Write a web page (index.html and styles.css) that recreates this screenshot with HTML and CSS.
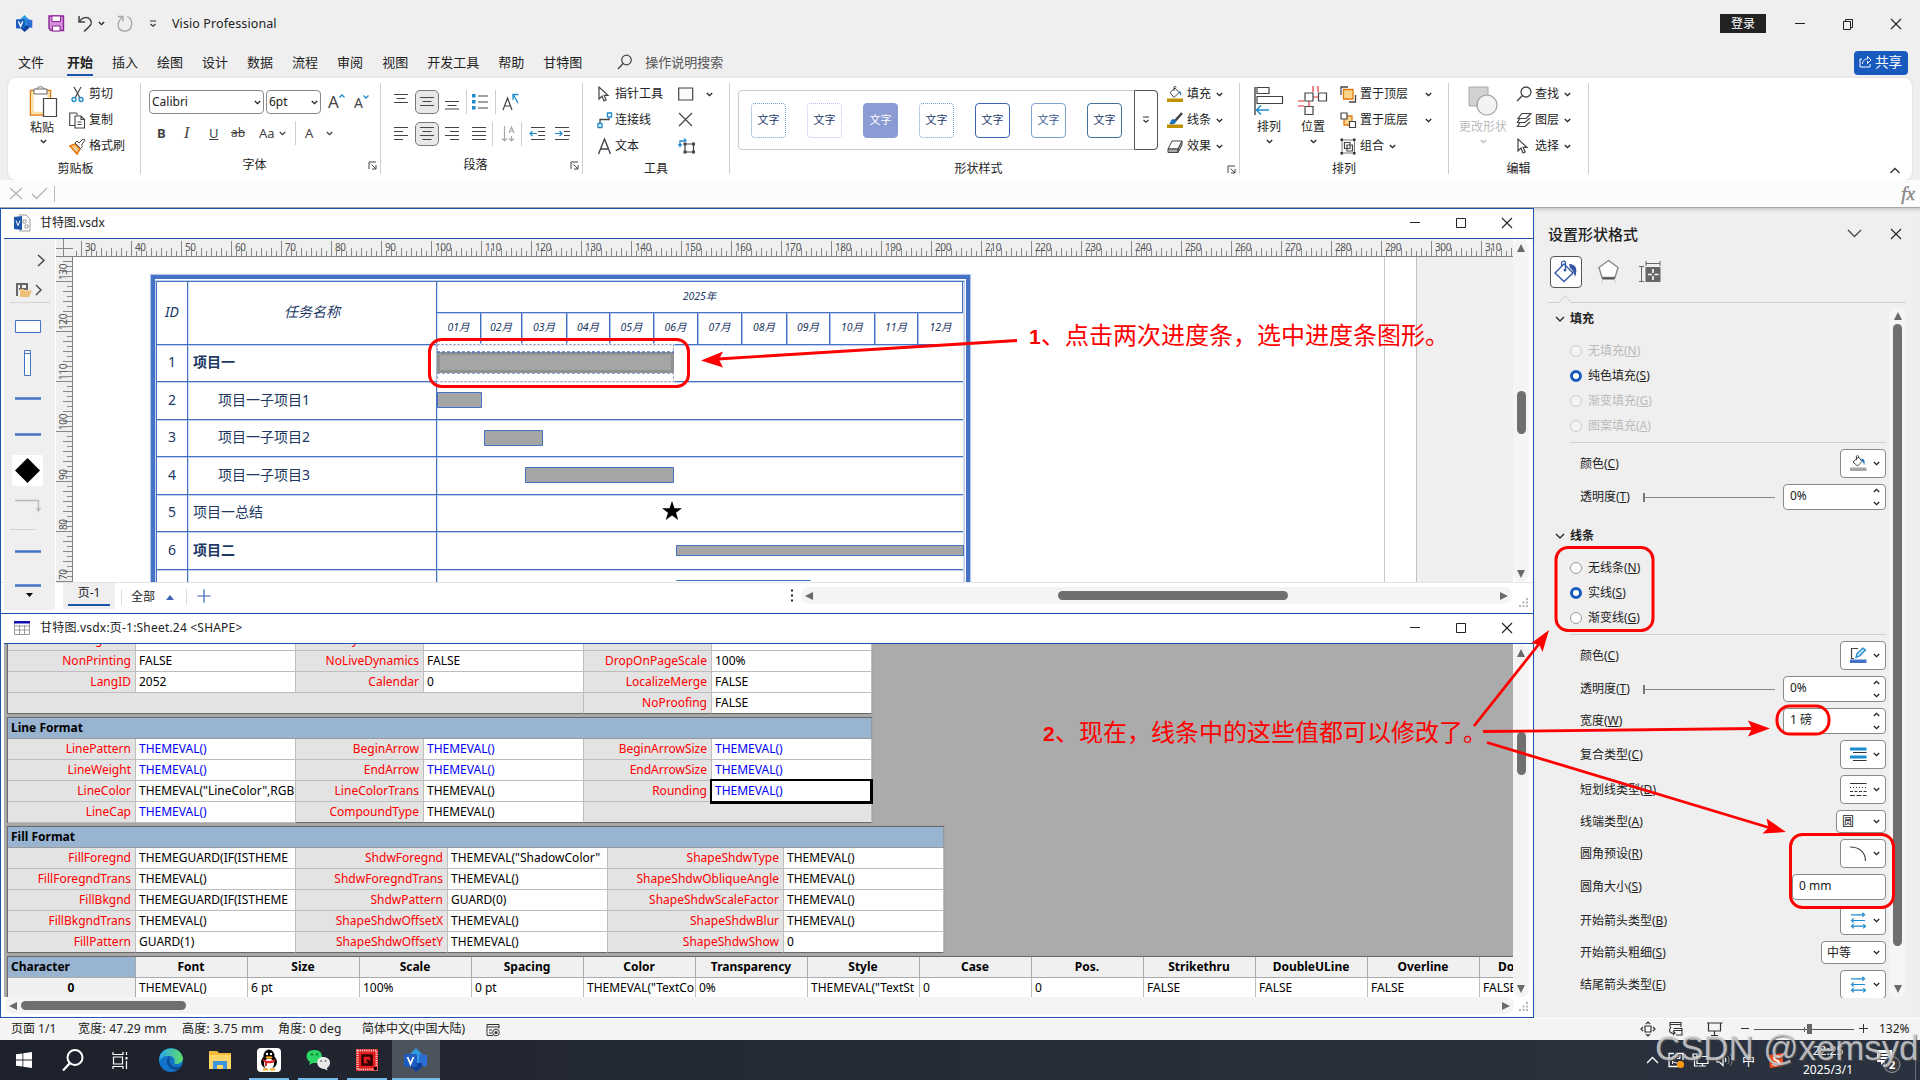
FILE: index.html
```html
<!DOCTYPE html>
<html lang="zh-CN">
<head>
<meta charset="utf-8">
<title>Visio Professional</title>
<link rel="stylesheet" href="styles.css">
</head>
<body>
<svg width="0" height="0" class="defs">
  <defs>
    <symbol id="chev" viewBox="0 0 7 5"><path d="M.8 1l2.700 2.700L6.200 1" fill="none" stroke="currentColor" stroke-width="1.300"/></symbol>
    <symbol id="launch" viewBox="0 0 9 9"><path d="M1 8V1h7M3.500 3.500L8 8M8 4v4H4" fill="none" stroke="#444"/></symbol>
    <symbol id="min" viewBox="0 0 12 12"><path d="M1 5.500h10" stroke="#222" fill="none"/></symbol>
    <symbol id="max" viewBox="0 0 12 12"><path d="M1.500 1.500h9v9h-9z" stroke="#222" fill="none"/></symbol>
    <symbol id="close" viewBox="0 0 12 12"><path d="M1 1l10 10M11 1L1 11" stroke="#222" fill="none" stroke-width="1.100"/></symbol>
    <symbol id="grip" viewBox="0 0 10 10"><path d="M8 1h2M8 4.500h2M4.500 4.500h2M8 8h2M4.500 8h2M1 8h2" stroke="#b5b5b5" stroke-width="2"/></symbol>
    <symbol id="arrows" viewBox="0 0 18 18"><path d="M1 3h14M13 .8L15.500 3 13 5.200M3 9h13M4 6.800L1.500 9 4 11.200M2 15h14M4 12.800L1.500 15 4 17.200M14 12.800l2.500 2.200-2.500 2.200" fill="none" stroke="#1e8bcd" stroke-width="1.200"/></symbol>
    <symbol id="cursor" viewBox="0 0 12 16"><path d="M2 1v12l3-3 2 5 2.200-1-2-4.600H11z" fill="#fff" stroke="#444" stroke-width="1.200"/></symbol>
    <symbol id="visio" viewBox="0 0 24 24"><path d="M12 0l6 6v12H6V6z" fill="#2f9ae0"/><path d="M15 6l8 1v11h-8z" fill="#2b6fd6"/><path d="M7 15h11v4l-6 5-5-5z" fill="#11409a"/><rect y="6" width="13" height="13" rx="1.500" fill="#1b5cbe"/><path d="M3.500 9l3 7 3-7" stroke="#fff" stroke-width="1.800" fill="none"/></symbol>
  </defs>
</svg>
<div class="app">
  <header class="titlebar">
    <svg width="17" height="17"><use href="#visio"/></svg>
    <svg width="17" height="17" viewBox="0 0 17 17"><path d="M1 1h14.500v14.500H3L1 13.500z" fill="#d68fdb" stroke="#8a2597" stroke-width="1.400"/><path d="M4 1h8.500v5.500H4z" fill="#fff" stroke="#8a2597"/><path d="M4.500 16v-5h7.500v5z" fill="#fff" stroke="#8a2597"/></svg>
    <svg width="17" height="18" viewBox="0 0 17 18"><path d="M2 1v6h6M2 7C5 2 11 1 13.500 5S13 11 7 16.500" fill="none" stroke="#444" stroke-width="1.500"/></svg>
    <svg width="7" height="5"><use href="#chev"/></svg>
    <svg width="18" height="18" viewBox="0 0 18 18"><path d="M2 1.500h5v5M11 1.500C18 4 17 16 9 16S0 8 6 2.500" fill="none" stroke="#a4a4a4" stroke-width="1.300"/></svg>
    <svg width="8" height="8" viewBox="0 0 8 8"><path d="M1 1h6M1.500 4L4 6.300 6.500 4" fill="none" stroke="#333" stroke-width="1.200"/></svg>
    <span class="app-name">Visio Professional</span>
    <span class="login">登录</span>
    <svg width="12" height="12"><use href="#min"/></svg>
    <svg width="12" height="12" viewBox="0 0 12 12"><path d="M1.500 3.500h7v8h-7zM3.500 3V1.500H10.500V9.500H9" fill="none" stroke="#222"/></svg>
    <svg width="12" height="12"><use href="#close"/></svg>
  </header>

  <nav class="tabs">
    <span>文件</span><span class="on">开始</span><span>插入</span><span>绘图</span><span>设计</span><span>数据</span><span>流程</span><span>审阅</span><span>视图</span><span>开发工具</span><span>帮助</span><span>甘特图</span>
    <span class="tellme"><svg width="16" height="16" viewBox="0 0 16 16"><circle cx="9.500" cy="6" r="4.800" fill="none" stroke="#444" stroke-width="1.200"/><path d="M6 9.500L1 15" stroke="#444" stroke-width="1.300"/></svg>操作说明搜索</span>
    <span class="share"><svg width="13" height="13" viewBox="0 0 13 13"><path d="M3 4H1v8h10V9M3.500 9c0-4 3-5 5-5V1.500L12 5 8.500 8.500V6" fill="none" stroke="#fff"/></svg>共享</span>
  </nav>

  <section class="ribbon-wrap">
  <div class="ribbon">
    <div class="group g-clip">
      <div class="body">
        <div class="big">
          <svg width="30" height="32" viewBox="0 0 30 32"><path d="M1.500 4.500h20V29h-20z" fill="#fff" stroke="#e07a10" stroke-width="1.500"/><path d="M3.500 6.500h16V27h-16z" fill="none" stroke="#fbe0a6" stroke-width="2.500"/><path d="M5 3h13v5H5zM8 3c0-3 7-3 7 0" fill="#fff" stroke="#666"/><path d="M14.500 12.500h13v18h-13z" fill="#fff" stroke="#444" stroke-width="1.200"/></svg>
          <span>粘贴</span><svg class="dd" width="7" height="5"><use href="#chev"/></svg>
        </div>
        <div class="stack">
          <div class="cmd"><svg width="18" height="17" viewBox="0 0 18 17"><path d="M5 1l6 11M12 1L6 12" stroke="#444" fill="none" stroke-width="1.200"/><circle cx="5" cy="13.500" r="2" fill="none" stroke="#1e8bcd" stroke-width="1.300"/><circle cx="12" cy="13.500" r="2" fill="none" stroke="#1e8bcd" stroke-width="1.300"/></svg>剪切</div>
          <div class="cmd"><svg width="18" height="17" viewBox="0 0 18 17"><path d="M6 13.500H.7V1h6.500l1.500 2M6 4h6l3.500 3.500V16H6zM12 4v3.500h3.500M8.500 10h4M8.500 12.500h4" fill="none" stroke="#444" stroke-width="1.100"/></svg>复制</div>
          <div class="cmd"><svg width="18" height="17" viewBox="0 0 18 17"><path d="M1 8l5-2 5 5-3 5z" fill="#fbc98c" stroke="#e07a10" stroke-width="1.600"/><path d="M6 5l2-2 2 2 4-4 2 1-3.500 5 1 1.500-2 2z" fill="#fff" stroke="#444"/></svg>格式刷</div>
        </div>
      </div>
      <div class="label">剪贴板</div>
    </div>

    <div class="group g-font">
      <div class="lines">
        <div class="font-a">
          <span class="combo">Calibri<svg width="7" height="5"><use href="#chev"/></svg></span>
          <span class="combo">6pt<svg width="7" height="5"><use href="#chev"/></svg></span>
          <span class="grow">A<svg width="6" height="4" viewBox="0 0 6 4"><path d="M.5 3.500L3 1l2.500 2.500" fill="none" stroke="#1e8bcd" stroke-width="1.300"/></svg></span>
          <span class="grow sm">A<svg width="6" height="4" viewBox="0 0 6 4"><path d="M.5.5L3 3 5.500.5" fill="none" stroke="#1e8bcd" stroke-width="1.300"/></svg></span>
        </div>
        <div class="font-b">
          <b>B</b><i>I</i><u>U</u><s>ab</s><span>Aa</span><svg width="7" height="5"><use href="#chev"/></svg><hr><span>A</span><svg width="7" height="5"><use href="#chev"/></svg>
        </div>
      </div>
      <div class="label">字体<svg width="9" height="9"><use href="#launch"/></svg></div>
    </div>

    <div class="group g-para">
      <div class="lines">
        <div class="para-a">
          <svg width="16" height="16" viewBox="0 0 16 16"><path d="M1 .5h14M3.500 4.500h9M1 8.500h14" stroke="#444" stroke-width="1.200"/></svg>
          <span class="sel"><svg width="16" height="16" viewBox="0 0 16 16"><path d="M1 3.500h14M3.500 7.500h9M1 11.500h14" stroke="#444" stroke-width="1.200"/></svg></span>
          <svg width="16" height="16" viewBox="0 0 16 16"><path d="M1 7.500h14M3.500 11.500h9M1 15h14" stroke="#444" stroke-width="1.200"/></svg>
          <hr>
          <svg width="16" height="16" viewBox="0 0 16 16"><path d="M6 2h10M6 8h10M6 14h10" stroke="#444" stroke-width="1.200"/><path d="M0 0h3.500v3.500H0zM0 6h3.500v3.500H0zM0 12h3.500v3.500H0z" fill="#1e8bcd"/></svg>
          <hr>
          <svg width="18" height="18" viewBox="0 0 18 18"><path d="M1 17L5.500 5 10 17M2.500 13h6" fill="none" stroke="#444" stroke-width="1.200"/><path d="M16 10L11.500 2M11 7V1.500h5.500" fill="none" stroke="#1e8bcd" stroke-width="1.300"/></svg>
        </div>
        <div class="para-b">
          <svg width="16" height="16" viewBox="0 0 16 16"><path d="M1 1.500h14M1 5.500h9M1 9.500h14M1 13.500h9" stroke="#444" stroke-width="1.200"/></svg>
          <span class="sel"><svg width="16" height="16" viewBox="0 0 16 16"><path d="M1 1.500h14M3.500 5.500h9M1 9.500h14M3.500 13.500h9" stroke="#444" stroke-width="1.200"/></svg></span>
          <svg width="16" height="16" viewBox="0 0 16 16"><path d="M1 1.500h14M6 5.500h9M1 9.500h14M6 13.500h9" stroke="#444" stroke-width="1.200"/></svg>
          <svg width="16" height="16" viewBox="0 0 16 16"><path d="M1 1.500h14M1 5.500h14M1 9.500h14M1 13.500h14" stroke="#444" stroke-width="1.200"/></svg>
          <hr>
          <svg width="15" height="18" viewBox="0 0 15 18"><path d="M3.500 1v15M1 13.500L3.500 16 6 13.500M10.500 11v5M8 13.500l2.500 2.500 2.500-2.500M8 8l2.500-6L13 8M9 6h3" fill="none" stroke="#a8a8a8" stroke-width="1.200"/></svg>
          <hr>
          <svg width="16" height="16" viewBox="0 0 16 16"><path d="M2 1.500h14M9 5.500h7M9 9.500h7M2 13.500h14" stroke="#444" stroke-width="1.200"/><path d="M1 7.500h7M3.500 5L1 7.500 3.500 10" stroke="#1e8bcd" fill="none" stroke-width="1.200"/></svg>
          <svg width="16" height="16" viewBox="0 0 16 16"><path d="M0 1.500h14M9 5.500h6M9 9.500h6M0 13.500h14" stroke="#444" stroke-width="1.200"/><path d="M0 7.500h7M4.500 5L7 7.500 4.500 10" stroke="#1e8bcd" fill="none" stroke-width="1.200"/></svg>
        </div>
      </div>
      <div class="label">段落<svg width="9" height="9"><use href="#launch"/></svg></div>
    </div>

    <div class="group g-tools">
      <div class="body">
        <div class="stack">
          <div class="cmd"><svg width="18" height="16" viewBox="0 0 18 16"><use href="#cursor" width="12" height="16"/></svg>指针工具</div>
          <div class="cmd"><svg width="18" height="17" viewBox="0 0 18 17"><path d="M3 11V7.500h9V6" fill="none" stroke="#444" stroke-width="1.300"/><path d="M1 11.500h4v4H1zM10.500 1h4v4h-4z" fill="#fff" stroke="#1e8bcd" stroke-width="1.300"/></svg>连接线</div>
          <div class="cmd"><svg width="18" height="17" viewBox="0 0 18 17"><path d="M1.500 16L7.500 1l6 15M4 11h7" fill="none" stroke="#444" stroke-width="1.400"/></svg>文本</div>
        </div>
        <div class="stack">
          <div class="cmd"><svg width="28" height="14" viewBox="0 0 28 14"><path d="M.7 1h14v12h-14z" fill="#fafafa" stroke="#444" stroke-width="1.200"/></svg><svg width="7" height="5"><use href="#chev"/></svg></div>
          <div class="cmd"><svg width="16" height="16" viewBox="0 0 16 16"><path d="M1 1l13 13M14 1L1 14" stroke="#444" stroke-width="1.200"/></svg></div>
          <div class="cmd"><svg width="18" height="18" viewBox="0 0 18 18"><path d="M7 7h8.500v8H7z" fill="none" stroke="#444" stroke-width="1.200"/><path d="M5.500 5.500h3v3h-3zM14 5.500h3v3h-3zM5.500 13.500h3v3h-3zM14 13.500h3v3h-3z" fill="#444"/><path d="M2 9V4h6M.5 7L2 9.500 3.700 7M6 1.500L8.500 4" fill="none" stroke="#1e8bcd" stroke-width="1.300"/></svg></div>
        </div>
      </div>
      <div class="label">工具</div>
    </div>

    <div class="group g-style">
      <div class="body">
        <div class="gallery">
          <span class="dot1">文字</span><span class="dot2">文字</span><span class="solid">文字</span><span class="dot1">文字</span><span class="l1">文字</span><span class="l2">文字</span><span class="l3">文字</span>
          <div class="more"><svg width="8" height="8" viewBox="0 0 8 8"><path d="M1 1h6M1.500 4L4 6.300 6.500 4" fill="none" stroke="#333" stroke-width="1.200"/></svg></div>
        </div>
        <div class="stack">
          <div class="cmd"><svg width="20" height="17" viewBox="0 0 20 17"><path d="M3 6.500L8 2l4 4.500-5 5z" fill="#fff" stroke="#444"/><path d="M7 5V1.500c0-1.500 2-1.500 2 0" fill="none" stroke="#444"/><path d="M12 5c2 0 2.500 3 2 5l-2-4" fill="#1a6fb8"/><path d="M0 12.500h16V16H0z" fill="#c19000"/></svg>填充<svg class="gap" width="7" height="5"><use href="#chev"/></svg></div>
          <div class="cmd"><svg width="20" height="17" viewBox="0 0 20 17"><path d="M15 1L8 9" stroke="#444" stroke-width="2.500"/><path d="M2 12c2-1 1-5 5-5l2 2c0 3-3 4-7 3" fill="#1a6fb8"/><path d="M0 12.500h16V16H0z" fill="#c19000"/></svg>线条<svg class="gap" width="7" height="5"><use href="#chev"/></svg></div>
          <div class="cmd"><svg width="20" height="17" viewBox="0 0 20 17"><path d="M5 3h10l-4 8H1z" fill="#fff" stroke="#444"/><path d="M1 11h10v3.500H1zM11 11l4-8v4l-4 7.500z" fill="#aaa" stroke="#444"/></svg>效果<svg class="gap" width="7" height="5"><use href="#chev"/></svg></div>
        </div>
      </div>
      <div class="label">形状样式<svg width="9" height="9"><use href="#launch"/></svg></div>
    </div>

    <div class="group g-arr">
      <div class="body">
        <div class="big"><svg width="30" height="30" viewBox="0 0 30 30"><path d="M1 1v28" stroke="#444" stroke-width="1.400"/><path d="M3 1.500h12v6H3zM3 10.500h25.500v7H3z" fill="#fff" stroke="#444" stroke-width="1.200"/><path d="M15 24H3M7 19.500L2.500 24 7 28.500" fill="none" stroke="#1e8bcd" stroke-width="1.500"/></svg><span>排列</span><svg class="dd" width="7" height="5"><use href="#chev"/></svg></div>
        <div class="big"><svg width="30" height="30" viewBox="0 0 30 30"><path d="M15 0v6M20 0v6M0 15h6M0 20h6M11 15v6M15 11h5" stroke="#e03030" stroke-width="1.200"/><path d="M7 7h8v8H7zM20.500 7h8v8h-8zM7 20.500h8v8H7z" fill="#fff" stroke="#444" stroke-width="1.200"/></svg><span>位置</span><svg class="dd" width="7" height="5"><use href="#chev"/></svg></div>
        <div class="stack">
          <div class="cmd w"><svg width="20" height="17" viewBox="0 0 20 17"><path d="M8 1H1v8M15.500 9v7H9" fill="none" stroke="#444" stroke-width="1.300"/><path d="M3.500 3.500h9.500V13H3.500z" fill="#fbd68a" stroke="#e07a10" stroke-width="1.300"/></svg><span>置于顶层</span><svg width="7" height="5"><use href="#chev"/></svg></div>
          <div class="cmd w"><svg width="20" height="17" viewBox="0 0 20 17"><path d="M4 4h8v9H4z" fill="#fbd68a" stroke="#e07a10" stroke-width="1.300"/><path d="M1 1h6v6H1zM9.500 9.500h6v6h-6z" fill="#fff" stroke="#444" stroke-width="1.200"/></svg><span>置于底层</span><svg width="7" height="5"><use href="#chev"/></svg></div>
          <div class="cmd"><svg width="20" height="17" viewBox="0 0 20 17"><path d="M2 2h12.500v13H2z" fill="none" stroke="#777"/><path d="M.5.500h2.500v2.500H.5zM13 .5h2.500v2.500H13zM.5 14h2.500v2.500H.5zM13 14h2.500v2.500H13z" fill="#333"/><path d="M4.500 4.500h5.500v6H4.500zM7 7h5.500v6H7z" fill="none" stroke="#444" stroke-width="1.200"/></svg>组合<svg class="gap" width="7" height="5"><use href="#chev"/></svg></div>
        </div>
      </div>
      <div class="label">排列</div>
    </div>

    <div class="group g-edit">
      <div class="body">
        <div class="big off"><svg width="30" height="30" viewBox="0 0 30 30"><path d="M1 1h19v19H1z" fill="#d2d2d2" stroke="#a8a8a8"/><circle cx="19" cy="19" r="10" fill="#f3f3f3" stroke="#a0a0a0" stroke-width="1.200"/></svg><span>更改形状</span><svg class="dd" width="7" height="5"><use href="#chev"/></svg></div>
        <div class="stack">
          <div class="cmd"><svg width="19" height="16" viewBox="0 0 19 16"><circle cx="10" cy="6" r="5" fill="none" stroke="#444" stroke-width="1.300"/><path d="M6.500 9.500L1 15" stroke="#444" stroke-width="1.400"/></svg>查找<svg class="gap" width="7" height="5"><use href="#chev"/></svg></div>
          <div class="cmd"><svg width="19" height="16" viewBox="0 0 19 16"><path d="M6 1.500h9l-5 5H2zM4 6l-2.500 4.500H9L14 6M4 10.500L1.500 14.500H9L14 10" fill="none" stroke="#444" stroke-width="1.200"/></svg>图层<svg class="gap" width="7" height="5"><use href="#chev"/></svg></div>
          <div class="cmd"><svg width="19" height="16" viewBox="0 0 19 16"><use href="#cursor" width="12" height="16"/></svg>选择<svg class="gap" width="7" height="5"><use href="#chev"/></svg></div>
        </div>
      </div>
      <div class="label">编辑</div>
    </div>
    <svg class="collapse" width="12" height="7" viewBox="0 0 12 7"><path d="M1.500 6L6 1.500 10.500 6" fill="none" stroke="#333" stroke-width="1.300"/></svg>
  </div>
  </section>

  <div class="formula">
    <svg width="14" height="13" viewBox="0 0 14 13"><path d="M1 1l12 11M13 1L1 12" stroke="#b4b4b4" stroke-width="1.400"/></svg>
    <svg width="17" height="13" viewBox="0 0 17 13"><path d="M1 7l4.500 4.500L16 1" fill="none" stroke="#b4b4b4" stroke-width="1.400"/></svg>
    <hr><em>fx</em>
  </div>

  <main class="work">
    <div class="docs">
      <section class="win draw">
        <div class="wt">
          <svg width="17" height="18" viewBox="0 0 17 18"><path d="M5 1h7l4 4v12H5" fill="#fff" stroke="#999"/><path d="M9 6h3v3H9zM11 11h3v3h-3z" fill="none" stroke="#999"/><path d="M0 3l8-1v14l-8-1z" fill="#1c56a8"/><path d="M2 6.500l2 5 2-5" fill="none" stroke="#fff"/></svg>
          <span>甘特图.vsdx</span>
          <svg width="12" height="12"><use href="#min"/></svg><svg width="12" height="12"><use href="#max"/></svg><svg width="12" height="12"><use href="#close"/></svg>
        </div>
        <div class="draw-main">
          <aside class="stencil">
            <svg width="51" height="371" viewBox="4 239 51 371">
              <path d="M38 255l6 5.500-6 5.500M36 285l5 5-5 5" fill="none" stroke="#444" stroke-width="1.400"/>
              <path d="M17 296v-12h10v5h-8M21 284v9" fill="none" stroke="#666" stroke-width="2"/><path d="M20 297v-8h4l1 1.500h7L29 297z" fill="#eebf77"/>
              <path d="M10 302.500h40M10 529.500h26" stroke="#d4d4d4"/>
              <path d="M15.500 320.500h25v12h-25z" fill="#fff" stroke="#4472c4"/><path d="M24.500 350.500h6v25h-6zM24.500 353.500h6" fill="#fff" stroke="#4472c4"/>
              <path d="M15 398.500h26M15 434.500h26M15 551.500h26M15 585.500h26" stroke="#4472c4" stroke-width="2.500"/>
              <rect x="12" y="455" width="31" height="31" rx="2" fill="#fff"/><path d="M27.500 458l12.500 12.500L27.500 483 15 470.500z"/>
              <path d="M15 500.500h23.500v10M36.500 508l2 3 2-3" fill="none" stroke="#b8b8b8" stroke-width="1.300"/><path d="M26 593h7l-3.500 4z"/>
            </svg>
          </aside>
          <div class="canvas-col">
            <div class="ruler-row">
              <div class="corner"></div>
              <div class="ruler-h"><span>30</span><span>40</span><span>50</span><span>60</span><span>70</span><span>80</span><span>90</span><span>100</span><span>110</span><span>120</span><span>130</span><span>140</span><span>150</span><span>160</span><span>170</span><span>180</span><span>190</span><span>200</span><span>210</span><span>220</span><span>230</span><span>240</span><span>250</span><span>260</span><span>270</span><span>280</span><span>290</span><span>300</span><span>310</span></div>
            </div>
            <div class="canvas-row">
              <div class="ruler-v"><span>130</span><span>120</span><span>110</span><span>100</span><span>90</span><span>80</span><span>70</span></div>
              <div class="canvas">
                <div class="page">
                  <div class="gantt">
                    <div class="grid">
                      <div class="hid">ID</div><div class="hname">任务名称</div>
                      <div class="hyear">2025年</div>
                      <div class="months"><span>01月</span><span>02月</span><span>03月</span><span>04月</span><span>05月</span><span>06月</span><span>07月</span><span>08月</span><span>09月</span><span>10月</span><span>11月</span><span>12月</span></div>
                      <div class="id">1</div><div class="nm b">项目一</div><div class="tl"></div>
                      <div class="id">2</div><div class="nm sub">项目一子项目1</div><div class="tl"></div>
                      <div class="id">3</div><div class="nm sub">项目一子项目2</div><div class="tl"></div>
                      <div class="id">4</div><div class="nm sub">项目一子项目3</div><div class="tl"></div>
                      <div class="id">5</div><div class="nm">项目一总结</div><div class="tl"></div>
                      <div class="id">6</div><div class="nm b">项目二</div><div class="tl"></div>
                      <div class="id"></div><div class="nm"></div><div class="tl"></div>
                    </div>
                  </div>
                  <svg class="bars" width="1312" height="324" viewBox="73 257 1312 324">
                    <path d="M437.500 344.500h236v37h-236z" fill="none" stroke="#fff" stroke-width="2"/>
                    <path d="M437.500 344.500h236v37h-236z" fill="none" stroke="#8a8fa5" stroke-dasharray="2 2"/>
                    <rect x="438.500" y="353.500" width="234" height="18" fill="#a5a5a5" stroke="#919191" stroke-width="3"/>
                    <path d="M437 352h237" stroke="#4472c4" stroke-width="1.500" stroke-dasharray="3 2"/><path d="M437 373.500h237" stroke="#8fa9dc" stroke-dasharray="3 2"/>
                    <g fill="#a5a5a5" stroke="#4472c4"><path d="M437.500 392.500h44v15h-44zM484.500 430.500h58v15h-58zM525.500 467.500h148v15h-148zM676.500 545.500h287v10h-287zM676.500 580.500h134v10h-134z"/></g>
                    <path d="M672 501l2.500 7.200h7.500l-6 4.600 2.300 7.200-6.300-4.400-6.300 4.400 2.300-7.200-6-4.600h7.500z"/>
                  </svg>
                </div>
              </div>
            </div>
          </div>
          <div class="vscroll v1"><i class="up"></i><b></b><i class="down"></i></div>
        </div>
        <div class="pagebar">
          <span class="pg"><u>页-1</u></span><span class="all">全部<i class="up blue"></i></span>
          <svg width="14" height="14" viewBox="0 0 14 14"><path d="M7 .5v13M.5 7h13" stroke="#3a62b5" stroke-width="1.200"/></svg>
          <svg class="dots" width="3" height="14" viewBox="0 0 3 14"><path d="M1 1.500h2M1 6.500h2M1 11.500h2" stroke="#222" stroke-width="2"/></svg>
          <div class="hscroll h1"><i class="left"></i><b></b><i class="right"></i></div>
          <svg class="gripper" width="10" height="10"><use href="#grip"/></svg>
        </div>
      </section>

      <section class="win sheetwin">
        <div class="wt">
          <svg width="17" height="15" viewBox="0 0 17 15"><path d="M.5 1h15v12.500H.5zM.5 5h15M.5 9h15M5.500 4v9M10.500 4v9" fill="#fff" stroke="#999"/><path d="M0 0h16v2.500H0z" fill="#1010b0"/></svg>
          <span class="wide">甘特图.vsdx:页-1:Sheet.24 &lt;SHAPE&gt;</span>
          <svg width="12" height="12"><use href="#min"/></svg><svg width="12" height="12"><use href="#max"/></svg><svg width="12" height="12"><use href="#close"/></svg>
        </div>
        <div class="sheet-main">
          <div class="sheet">
            <div class="blk ba first">
              <s>NoAlignBox</s><p>FALSE</p><s>DynFeedback</s><p>0</p><s>Comment</s><p></p>
              <s>NonPrinting</s><p>FALSE</p><s>NoLiveDynamics</s><p>FALSE</p><s>DropOnPageScale</s><p>100%</p>
              <s>LangID</s><p>2052</p><s>Calendar</s><p>0</p><s>LocalizeMerge</s><p>FALSE</p>
              <s class="span4"></s><s>NoProofing</s><p>FALSE</p>
            </div>
            <div class="blk ba">
              <h4>Line Format</h4>
              <s>LinePattern</s><p class="bl">THEMEVAL()</p><s>BeginArrow</s><p class="bl">THEMEVAL()</p><s>BeginArrowSize</s><p class="bl">THEMEVAL()</p>
              <s>LineWeight</s><p class="bl">THEMEVAL()</p><s>EndArrow</s><p class="bl">THEMEVAL()</p><s>EndArrowSize</s><p class="bl">THEMEVAL()</p>
              <s>LineColor</s><p>THEMEVAL("LineColor",RGB</p><s>LineColorTrans</s><p>THEMEVAL()</p><s>Rounding</s><p class="bl cur">THEMEVAL()</p>
              <s>LineCap</s><p class="bl">THEMEVAL()</p><s>CompoundType</s><p>THEMEVAL()</p><s class="span2"></s>
            </div>
            <div class="blk bf">
              <h4>Fill Format</h4>
              <s>FillForegnd</s><p>THEMEGUARD(IF(ISTHEME</p><s>ShdwForegnd</s><p>THEMEVAL("ShadowColor"</p><s>ShapeShdwType</s><p>THEMEVAL()</p>
              <s>FillForegndTrans</s><p>THEMEVAL()</p><s>ShdwForegndTrans</s><p>THEMEVAL()</p><s>ShapeShdwObliqueAngle</s><p>THEMEVAL()</p>
              <s>FillBkgnd</s><p>THEMEGUARD(IF(ISTHEME</p><s>ShdwPattern</s><p>GUARD(0)</p><s>ShapeShdwScaleFactor</s><p>THEMEVAL()</p>
              <s>FillBkgndTrans</s><p>THEMEVAL()</p><s>ShapeShdwOffsetX</s><p>THEMEVAL()</p><s>ShapeShdwBlur</s><p>THEMEVAL()</p>
              <s>FillPattern</s><p>GUARD(1)</p><s>ShapeShdwOffsetY</s><p>THEMEVAL()</p><s>ShapeShdwShow</s><p>0</p>
            </div>
            <div class="blk bc">
              <h5 class="first-h">Character</h5><h5>Font</h5><h5>Size</h5><h5>Scale</h5><h5>Spacing</h5><h5>Color</h5><h5>Transparency</h5><h5>Style</h5><h5>Case</h5><h5>Pos.</h5><h5>Strikethru</h5><h5>DoubleULine</h5><h5>Overline</h5><h5 class="cut">Do</h5>
              <h5>0</h5><p>THEMEVAL()</p><p>6 pt</p><p>100%</p><p>0 pt</p><p>THEMEVAL("TextCo</p><p>0%</p><p>THEMEVAL("TextSt</p><p>0</p><p>0</p><p>FALSE</p><p>FALSE</p><p>FALSE</p><p>FALSE</p>
            </div>
          </div>
          <div class="vscroll v2"><i class="up"></i><b></b><i class="down"></i></div>
        </div>
        <div class="hrow">
          <div class="hscroll h2"><i class="left"></i><b></b><i class="right"></i></div>
          <svg class="gripper" width="10" height="10"><use href="#grip"/></svg>
        </div>
      </section>
    </div>

    <aside class="pane">
      <div class="pane-title"><span>设置形状格式</span><svg width="15" height="9" viewBox="0 0 15 9"><path d="M1 1l6.500 6.500L14 1" fill="none" stroke="#444" stroke-width="1.300"/></svg><svg width="12" height="12"><use href="#close"/></svg></div>
      <div class="pane-tabs">
        <span class="ptab"><svg width="26" height="24" viewBox="0 0 26 24"><path d="M2 13L11 4l9 9-9 8.500z" fill="#fff" stroke="#3557a8" stroke-width="1.400"/><path d="M8.500 6V3c0-2.500 4-2.500 4 0v6" fill="none" stroke="#3557a8" stroke-width="1.200"/><circle cx="12" cy="10" r="1.500" fill="#3557a8"/><path d="M16 4c7 0 9 5 6 13-1-5-3-8-5-9z" fill="#3557a8"/></svg></span>
        <svg width="21" height="25" viewBox="0 0 21 25"><path d="M10.500 1.500L20 8.500l-3 10h-13l-3-10z" fill="#fff" stroke="#888" stroke-width="1.400"/><path d="M4 19.500h13" stroke="#555" stroke-width="2"/><path d="M4.500 20l-1 4M16.500 20l1 4" stroke="#ccc"/></svg>
        <svg class="dims" width="22" height="24" viewBox="0 0 22 24"><path d="M6.500 7h15v15h-15z" fill="#666"/><path d="M14 9v4M14 16v4M9 14.500h4M15.500 14.500h4" stroke="#fff" stroke-width="1.600"/><path d="M2.500 7v14M0 6.500h5M0 21.500h5M7 3.500h14M7 1v5M21 1v5" stroke="#666" fill="none"/></svg>
      </div>
      <svg class="notch" width="358" height="9" viewBox="0 0 358 9"><path d="M0 8.500h11l6-7 6 7h335" fill="none" stroke="#cfcfcf"/></svg>
      <div class="pane-scroll">
        <div class="opts">
          <div class="sec"><svg width="10" height="7" viewBox="0 0 10 7"><path d="M1 1l4 4 4-4" fill="none" stroke="#333" stroke-width="1.500"/></svg>填充</div>
          <div class="radios">
            <label class="off"><i></i>无填充(<u>N</u>)</label><label><i class="on"></i>纯色填充(<u>S</u>)</label><label class="off"><i></i>渐变填充(<u>G</u>)</label><label class="off"><i></i>图案填充(<u>A</u>)</label>
          </div>
          <div class="fields">
            <div class="f btn"><span>颜色(<u>C</u>)</span><span class="box"><svg width="17" height="17" viewBox="0 0 17 17"><path d="M3 7l5.500-5L12 6.500 7.500 11z" fill="#fff" stroke="#444"/><path d="M6.500 5V1.500c0-1.200 2-1.200 2 0V3" fill="none" stroke="#444"/><path d="M11.500 3.500c3 .5 4 3 2.500 7-.5-3-1-4-2.500-5" fill="#1a6fb8"/><path d="M0 12.500h16.500V16H0z" fill="#a5a5a5"/></svg><svg width="7" height="5"><use href="#chev"/></svg></span></div>
            <div class="f num"><span>透明度(<u>T</u>)</span><span class="slider"></span><span class="box">0%<span class="spin"><svg width="7" height="5"><use href="#chev"/></svg><svg width="7" height="5"><use href="#chev"/></svg></span></span></div>
          </div>
          <div class="sec two"><svg width="10" height="7" viewBox="0 0 10 7"><path d="M1 1l4 4 4-4" fill="none" stroke="#333" stroke-width="1.500"/></svg>线条</div>
          <div class="radios">
            <label><i></i>无线条(<u>N</u>)</label><label><i class="on"></i>实线(<u>S</u>)</label><label><i></i>渐变线(<u>G</u>)</label>
          </div>
          <div class="fields">
            <div class="f btn"><span>颜色(<u>C</u>)</span><span class="box"><svg width="17" height="17" viewBox="0 0 17 17"><path d="M8 1.500H1.500v10H4" fill="none" stroke="#444" stroke-width="1.200"/><path d="M6 10.500l1-4L13 1l2.500 2-6 6z" fill="#bfe0f5" stroke="#1e8bcd" stroke-width="1.300"/><path d="M0 12.500h16.500V16H0z" fill="#4472c4"/></svg><svg width="7" height="5"><use href="#chev"/></svg></span></div>
            <div class="f num"><span>透明度(<u>T</u>)</span><span class="slider"></span><span class="box">0%<span class="spin"><svg width="7" height="5"><use href="#chev"/></svg><svg width="7" height="5"><use href="#chev"/></svg></span></span></div>
            <div class="f num"><span>宽度(<u>W</u>)</span><span class="box">1 磅<span class="spin"><svg width="7" height="5"><use href="#chev"/></svg><svg width="7" height="5"><use href="#chev"/></svg></span></span></div>
            <div class="f btn"><span>复合类型(<u>C</u>)</span><span class="box"><svg width="17" height="15" viewBox="0 0 17 15"><path d="M0 2h16.500M0 10h16.500" stroke="#1e8bcd" stroke-width="3"/><path d="M3 5.500h13.500M3 13.500h13.500" stroke="#333"/></svg><svg width="7" height="5"><use href="#chev"/></svg></span></div>
            <div class="f btn"><span>短划线类型(<u>D</u>)</span><span class="box"><svg width="17" height="15" viewBox="0 0 17 15"><path d="M0 1.500h16.500" stroke="#333"/><path d="M0 5.500h16.500" stroke="#333" stroke-dasharray="1 2"/><path d="M0 9.500h16.500" stroke="#333" stroke-dasharray="3 1.500"/><path d="M0 13.500h16.500" stroke="#333" stroke-dasharray="5 1.500"/></svg><svg width="7" height="5"><use href="#chev"/></svg></span></div>
            <div class="f pick"><span>线端类型(<u>A</u>)</span><span class="box narrow">圆<svg width="7" height="5"><use href="#chev"/></svg></span></div>
            <div class="f btn"><span>圆角预设(<u>R</u>)</span><span class="box"><svg width="17" height="17" viewBox="0 0 17 17"><path d="M0 2c9 0 15.500 5 15.500 14" fill="none" stroke="#444" stroke-width="1.200"/></svg><svg width="7" height="5"><use href="#chev"/></svg></span></div>
            <div class="f num"><span>圆角大小(<u>S</u>)</span><span class="box size">0 mm</span></div>
            <div class="f btn"><span>开始箭头类型(<u>B</u>)</span><span class="box"><svg width="17" height="17"><use href="#arrows"/></svg><svg width="7" height="5"><use href="#chev"/></svg></span></div>
            <div class="f pick"><span>开始箭头粗细(<u>S</u>)</span><span class="box mid">中等<svg width="7" height="5"><use href="#chev"/></svg></span></div>
            <div class="f btn"><span>结尾箭头类型(<u>E</u>)</span><span class="box"><svg width="17" height="17"><use href="#arrows"/></svg><svg width="7" height="5"><use href="#chev"/></svg></span></div>
          </div>
        </div>
        <div class="vscroll v3"><i class="up"></i><b></b><i class="down"></i></div>
      </div>
    </aside>
  </main>

  <footer class="status">
    <span>页面 1/1</span><span class="wide">宽度: 47.29 mm</span><span class="wide">高度: 3.75 mm</span><span class="wide">角度: 0 deg</span><span>简体中文(中国大陆)</span>
    <svg width="14" height="14" viewBox="0 0 14 14"><path d="M1 1.500h12v4M1 1.500v11h6M1 4h12M3 7h3M3 10h3" fill="none" stroke="#333"/><circle cx="10" cy="9.500" r="3.300" fill="none" stroke="#333"/><circle cx="10" cy="9.500" r="1.500" fill="#333"/></svg>
    <span class="view">
      <svg width="16" height="16" viewBox="0 0 16 16"><path d="M5 5h6v6H5zM6 3l2-2 2 2M6 13l2 2 2-2M3 6L1 8l2 2M13 6l2 2-2 2" fill="none" stroke="#333" stroke-width="1.200"/></svg>
      <svg width="15" height="16" viewBox="0 0 15 16"><path d="M2 6V1.500h11V6M2 3.500h11M5.500 7.500H14V14H8M5.500 9.500H14M3 6c-3 4-1 7 4 6M5 10l2 2-2 2" fill="none" stroke="#333" stroke-width="1.100"/></svg>
      <svg width="16" height="16" viewBox="0 0 16 16"><path d="M0 2h15.500M1.500 2v8h12V2M7.500 10v4M4 14.500h7" fill="none" stroke="#333" stroke-width="1.200"/></svg>
      <svg width="118" height="12" viewBox="0 0 118 12"><path d="M13 6.500h100" stroke="#555"/><path d="M0 5.500h8" stroke="#333"/><path d="M63.500 4v5" stroke="#666"/><path d="M66 1h5v10h-5z" fill="#666"/></svg>
      <svg width="10" height="10" viewBox="0 0 10 10"><path d="M0 4.500h9M4.500 0v9" stroke="#333"/></svg>
      <span>132%</span>
    </span>
  </footer>

  <footer class="taskbar">
    <span class="tk"><svg width="16" height="16" viewBox="0 0 16 16"><path d="M0 2.300l6.500-.9v6.200H0zM7.300 1.300L16 0v7.600H7.300zM0 8.400h6.500v6.200L0 13.700zM7.300 8.400H16V16l-8.700-1.300z" fill="#fff"/></svg></span>
    <span class="tk"><svg width="24" height="24" viewBox="0 0 24 24"><circle cx="14" cy="9.500" r="7.500" fill="none" stroke="#fff" stroke-width="2"/><path d="M9 15l-7 7.500" stroke="#fff" stroke-width="2.300"/></svg></span>
    <span class="tk view-btn"><svg width="17" height="17" viewBox="0 0 17 17"><path d="M1 0v2.500h10V0M1 17v-2.500h10V17M1.500 5h9v7h-9zM14.500 0v3M14.500 9v8" fill="none" stroke="#fff" stroke-width="1.200"/><path d="M13.500 5h2v2.500h-2z" fill="#fff"/></svg></span>
    <span class="tk"><svg width="24" height="24" viewBox="0 0 24 24"><defs><linearGradient id="eg" x1="0" x2="1"><stop offset="0" stop-color="#2aa9e8"/><stop offset="1" stop-color="#5fdc6a"/></linearGradient></defs><circle cx="12" cy="12" r="12" fill="#1173c9"/><path d="M.5 9C3-2 21-3 24 10c0 5-5 7-9 5.500 2-3 0-7-4-7.500C6 7.500 2 9 .5 14z" fill="url(#eg)"/><path d="M11 8c-6 3-3 14 7 14 2-1 3.500-2.500 4.500-4-6 3-13 0-12-7z" fill="#0d4a94"/></svg></span>
    <span class="tk"><svg width="22" height="20" viewBox="0 0 22 20"><path d="M0 1h8l2 2h12v16H0z" fill="#f3b93b"/><path d="M0 5h22v14H0z" fill="#ffd768"/><path d="M4 19v-8h14v8h-4v-4H8v4z" fill="#3d95db"/></svg></span>
    <span class="tk run"><svg width="24" height="24" viewBox="0 0 24 24"><rect width="24" height="24" rx="4" fill="#fff"/><ellipse cx="12" cy="14" rx="8" ry="7"/><ellipse cx="12" cy="8" rx="5.500" ry="6.500"/><ellipse cx="12" cy="16" rx="5" ry="5.500" fill="#fff"/><path d="M6 11c3 2.500 9 2.500 12 0v2.500c-3 2-6 2-8 1.500v3H8v-4l-2-1z" fill="#e32424"/><ellipse cx="12" cy="9.500" rx="3.500" ry="1.200" fill="#f7a81c"/><circle cx="10" cy="6" r="1.200" fill="#fff"/><circle cx="14" cy="6" r="1.200" fill="#fff"/><path d="M6 21.500h5M13 21.500h5" stroke="#f7a81c" stroke-width="2"/></svg></span>
    <span class="tk run"><svg width="24" height="22" viewBox="0 0 24 22"><path d="M8 1c10-1 11 13 1 13l-2 0-4 2 1-3C-2 9 0 1 8 1" fill="#2bd566"/><circle cx="6" cy="5.500" r="1.200" fill="#13803a"/><circle cx="11" cy="5.500" r="1.200" fill="#13803a"/><path d="M17 8c8 0 9 8 4 11l.5 2.500-3-1.500C9 20 9 8 17 8" fill="#e9e9e9"/><circle cx="15" cy="12" r="1" fill="#777"/><circle cx="19.500" cy="12" r="1" fill="#777"/></svg></span>
    <span class="tk run"><svg width="22" height="22" viewBox="0 0 22 22"><rect width="22" height="22" fill="#e02020"/><path d="M1.500 1.500h19v19h-19z" fill="none" stroke="#f9d0d0" stroke-width="2" stroke-dasharray="1.200 1"/><path d="M4 4h14v14H4z" fill="#e31c1c"/><path d="M6.500 6.500h9v9h-9z" fill="#e31c1c" stroke="#300" stroke-width="2.500"/><path d="M11 11l5 5" stroke="#300" stroke-width="2.500"/><path d="M18 18h3v3h-3z"/></svg></span>
    <span class="tk run active"><svg width="24" height="24"><use href="#visio"/></svg></span>
    <span class="tray">
      <svg width="13" height="8" viewBox="0 0 13 8"><path d="M1 7l5.500-5.500L12 7" fill="none" stroke="#fff" stroke-width="1.400"/></svg>
      <svg width="17" height="16" viewBox="0 0 17 16"><path d="M6 1.500H1v13h9M9 1.500h6V8" fill="none" stroke="#fff" stroke-width="1.300"/><path d="M4 7c1-4 7-4 8-1M12 3v3.500H9M12 9c-2 3-6 2-7.500 0v3" fill="none" stroke="#fff"/><circle cx="12.500" cy="12.500" r="3.500" fill="#ff9a12"/></svg>
      <svg width="17" height="14" viewBox="0 0 17 14"><path d="M5 3.500h11v7H5zM7 13h7M10.500 11v2M1 1h4v3H1zM2.500 4v9h4" fill="none" stroke="#fff" stroke-width="1.200"/></svg>
      <svg width="17" height="14" viewBox="0 0 17 14"><path d="M1 5v4h2.500L7 12.500v-11L3.500 5zM9 5c1 1 1 3 0 4" fill="none" stroke="#fff" stroke-width="1.200"/><path d="M11.500 3c2 2 2 6 0 8M14 1c3 3 3 9 0 12" fill="none" stroke="#888"/></svg>
      <span class="ime">中</span>
      <svg width="16" height="15" viewBox="0 0 16 15"><path d="M1 2l14-2v13L2 15z" fill="#f4511e"/><path d="M12 4C8 2.500 5 4 6.500 6S12 8 11 10.500 6 12 4.500 10.500" fill="none" stroke="#fff" stroke-width="2"/></svg>
      <span class="clock">22:25<br>2025/3/1</span>
      <span class="action"><svg width="26" height="26" viewBox="0 0 26 26"><path d="M1 3h15v12H8l-3 3v-3H1z" fill="#fff"/><path d="M3.500 6.500h10M3.500 9.500h10M3.500 12.500h7" stroke="#2a313c"/><circle cx="16" cy="17.500" r="8" fill="#3a3d44" stroke="#999"/></svg><b>2</b></span>
      <hr>
    </span>
  </footer>

  <svg class="notes" width="1920" height="1080" viewBox="0 0 1920 1080">
    <g fill="none" stroke="#f00" stroke-width="3">
      <rect x="429.500" y="339.500" width="259" height="47" rx="12"/><rect x="1556" y="547.500" width="97" height="83" rx="12"/><rect x="1777" y="706" width="52" height="28" rx="13"/><rect x="1790.500" y="834.500" width="103" height="73" rx="12"/>
      <path d="M1017 340.500L718 359M1474 726l65-82M1483 731.500l272-3M1487 742.500l285 86" stroke-width="2.800"/>
    </g>
    <g fill="#f00"><path d="M701 360.500l22-9-4 8 4 8z"/><path d="M1549 630l-6.500 22-3-7-8-2z"/><path d="M1770 728.500l-22 8 4-8-4-8z"/><path d="M1786 832l-23.500 1.500 6-6-2-9z"/></g>
  </svg>
  <div class="note n1"><b>1</b>、点击两次进度条，选中进度条图形。</div>
  <div class="note n2"><b>2</b>、现在，线条中的这些值都可以修改了。</div>
  <div class="mark">CSDN @xemsyd</div>
</div>
</body>
</html>
```
FILE: styles.css
```css
* { box-sizing: border-box; }
body { margin: 0; font: 12px/16px "Noto Sans", "Noto Sans CJK SC", sans-serif; color: #222; background: #efefef; }
svg { display: block; flex: none; }
hr { margin: 0; border: 0; width: 1px; height: 24px; background: #cfcfcf; }
.defs { position: absolute; }
.app { position: relative; width: 1920px; height: 1080px; overflow: hidden; display: flex; flex-direction: column; white-space: nowrap; }
.wide { letter-spacing: .2px; }

/* title bar and tabs */
.titlebar { height: 47px; display: grid; grid-template-columns: 32px 29px 21px 18px 33px 23px 1548px 74px 48px 48px 12px; padding-left: 16px; align-items: center; }
.app-name { font-size: 12.5px; letter-spacing: .1px; }
.login { width: 46px; height: 19px; background: #222; color: #fff; text-align: center; line-height: 19px; }
.tabs { height: 31px; display: flex; align-items: center; gap: 19px; padding: 0 12px 0 18px; font-size: 13px; }
.tabs > span { margin-top: -1px; }
.tabs .on { font-weight: 700; border-bottom: 2px solid #1b55ad; margin: 4px 0 0 4px; height: 22px; line-height: 17px; }
.tabs .tellme { display: flex; gap: 12px; margin-left: 16px; color: #555; align-items: center; }
.tabs .share { margin: 0 0 0 auto; width: 54px; height: 24px; border-radius: 4px; background: #185abd; color: #fff; display: flex; align-items: center; gap: 3px; padding: 0 0 2px 5px; font-size: 13.5px; }

/* ribbon */
.ribbon-wrap { height: 102px; padding: 0 8px; }
.ribbon { height: 102px; background: #fff; border-radius: 8px; display: flex; box-shadow: 0 0 2px #ccc; }
.group { height: 91px; margin-top: 5px; border-right: 1px solid #cfcfcf; display: flex; flex-direction: column; flex: none; }
.g-clip { width: 133px; }
.g-font { width: 240px; }
.g-para { width: 202px; }
.g-tools { width: 147px; }
.g-style { width: 510px; }
.g-arr { width: 209px; }
.g-edit { width: 140px; }
.body { height: 76px; margin-top: -2px; display: flex; }
.label { height: 18px; line-height: 18px; text-align: center; display: grid; grid-template-columns: 1fr; margin-top: 3px; }
.label:has(svg) { grid-template-columns: 1fr 9px; padding-right: 3px; align-items: center; }
.g-clip .label { padding-left: 3px; }
.cmd { height: 26px; display: flex; align-items: center; gap: 2px; }
.cmd .gap { margin-left: 3px; }
.big { display: flex; flex-direction: column; align-items: center; padding-top: 5px; }
.big > span { margin-top: 3px; height: 16px; }
.big .dd { margin-top: 4px; }
.g-clip .big { width: 32px; margin: 0 9px 0 20px; }
.g-clip .big > span { margin-left: -4px; margin-top: 2px; }
.g-clip .big .dd { margin: 3px 0 0 -2px; }
.lines { height: 74px; padding-top: 7px; display: flex; flex-direction: column; gap: 8px; }
.font-a, .font-b, .para-a, .para-b { display: grid; height: 24px; align-items: center; }
.font-a { grid-template-columns: 117px 62px 26px 20px; padding-left: 8px; }
.combo { height: 24px; border: 1px solid #8a8a8a; border-radius: 4px; background: #fff; display: flex; align-items: center; justify-content: space-between; padding: 0 2px 0 2px; width: 115px; }
.combo + .combo { width: 55px; }
.grow { font-size: 17px; display: flex; align-items: center; line-height: 20px; color: #444; }
.grow svg { margin: -12px 0 0 0; }
.grow.sm { font-size: 14px; padding-top: 2px; }
.font-b { grid-template-columns: 27px 25px 22px 28px 20px 16px 10px 21px 8px; padding-left: 16px; font-size: 13px; color: #444; }
.font-b > * { margin-top: -2px; }
.font-b i { font-family: "Liberation Serif", serif; font-size: 16px; }
.font-b s { font-size: 12px; }
.para-a { grid-template-columns: 21px 30px 22px 6px 23px 7px 18px; padding-left: 12px; }
.para-b { grid-template-columns: 21px 30px 27px 21px 9px 20px 8px 26px 16px; padding-left: 12px; }
.sel { width: 24px; height: 24px; border: 1px solid #777; border-radius: 5px; background: #e8e8e8; display: grid; place-items: center; margin-left: 1px; }
.g-tools .stack + .stack { margin-left: 15px; }
.g-tools .stack:first-child { padding-left: 14px; }
.g-tools .cmd { gap: 0; }
.gallery { margin: 9px 10px 0 8px; width: 420px; height: 60px; border: 1px solid #c8c8c8; border-radius: 4px; display: flex; align-items: center; padding-left: 12px; gap: 21px; flex: none; }
.gallery > span { width: 35px; height: 35px; border-radius: 4px; text-align: center; line-height: 32px; font-size: 11px; color: #25396b; border: 1px solid; flex: none; }
.gallery .dot1 { border: 1px dotted #7d98d6; }
.gallery .dot2 { border: 1px dotted #b4c4e8; }
.gallery .solid { background: #8b9bd3; border-color: #8b9bd3; color: #fff; }
.gallery .l1 { border-color: #3d64b4; }
.gallery .l2 { border-color: #7ba3cf; color: #3d5d90; }
.gallery .l3 { border-color: #42719b; }
.more { width: 24px; height: 60px; margin: 0 -1px 0 -9px; border: 1px solid #555; border-radius: 0 4px 4px 0; display: grid; place-items: center; flex: none; }
.g-style .cmd, .g-arr .cmd, .g-edit .cmd { gap: 0; }
.g-style .stack { margin-left: -1px; }
.g-style .cmd .gap, .g-arr .cmd .gap, .g-edit .cmd .gap { margin-left: 5px; }
.g-arr .big { width: 30px; margin-left: 14px; }
.g-arr .stack { margin-left: 12px; }
.g-arr .cmd.w span { margin-right: 17px; }
.g-edit .big { margin-left: 9px; width: 50px; }
.g-edit .stack { margin-left: 8px; }
.off { color: #bbb; }
.collapse { margin: 89px 11px 0 auto; }

/* formula bar */
.formula { height: 28px; background: #fcfcfc; border-bottom: 1px solid #a8a8a8; display: flex; align-items: center; padding: 0 5px 0 9px; }
.formula svg + svg { margin-left: 8px; }
.formula hr { margin-left: 6px; height: 16px; background: #bbb; }
.formula em { margin-left: auto; font: italic 19px "Liberation Serif", serif; color: #888; -webkit-text-stroke: .4px #888; }

/* document windows */
.work { height: 810px; display: flex; flex: none; }
.docs { width: 1534px; height: 810px; border: 1px solid #1b55ad; background: #fff; flex: none; }
.wt { display: grid; align-items: center; grid-template-columns: 26px 1369px 46px 46px 12px; padding: 0 0 1px 10px; margin-left: 3px; }
.draw { height: 404px; }
.draw .wt { height: 30px; border-bottom: 1px solid #1b55ad; }
.draw-main { height: 343px; display: flex; padding-left: 3px; }
.stencil { width: 51px; height: 371px; background: #efefef; flex: none; position: relative; z-index: 1; }
.canvas-col { width: 1457px; margin-left: 1px; overflow: hidden; flex: none; height: 343px; background: #fff; }
.ruler-row { height: 18px; display: flex; background: #efefef; border-bottom: 1px solid #808080; }
.corner { width: 17px; background: linear-gradient(#888, #888) 7px 0/1px 100% no-repeat, linear-gradient(#888, #888) 0 9px/100% 1px no-repeat; flex: none; }
.ruler-h { width: 1440px; overflow: hidden; display: flex; padding-left: 12px; font-size: 10px; line-height: 16px; color: #555; letter-spacing: -.4px;
  background: linear-gradient(90deg, #888 1px, transparent 1px) 8px 2px/50px 16px repeat-x, linear-gradient(90deg, #888 1px, transparent 1px) 8px 9px/10px 9px repeat-x, linear-gradient(90deg, #888 1px, transparent 1px) 3px 12px/5px 6px repeat-x; }
.ruler-h span { width: 50px; flex: none; }
.canvas-row { display: flex; height: 325px; }
.ruler-v { width: 17px; flex: none; background: linear-gradient(#888 1px, transparent 1px) 0 24px/17px 50px repeat-y, linear-gradient(#888 1px, transparent 1px) 7px 4px/10px 10px repeat-y, linear-gradient(#888 1px, transparent 1px) 11px 4px/6px 5px repeat-y, #efefef; border-right: 1px solid #808080; font-size: 10px; letter-spacing: -.4px; color: #555; display: flex; flex-direction: column; overflow: hidden; }
.ruler-v span { writing-mode: vertical-rl; transform: rotate(180deg); height: 50px; flex: none; width: 14px; line-height: 14px; padding-top: 1px; }
.ruler-v span:first-child { height: 24px; }
.canvas { width: 1440px; background: #efefef; overflow: hidden; }
.page { position: relative; width: 1344px; height: 325px; border-right: 1px solid #c0c0c0; background: linear-gradient(#c8c8c8, #c8c8c8) 1311px 0/1px 100% no-repeat, #fff; overflow: hidden; }
.gantt { width: 819px; height: 340px; margin: 18px 0 0 78px; border: 4px solid #4472c4; padding: 2px 2px 2px 1px; color: #203764; box-shadow: 0 0 1px 1px #b9c9ea; }
.page { display: flow-root; }
.grid { width: 808px; border: 1px solid #4472c4; outline: 1px solid #c2d0ee; display: grid; grid-template-columns: 31px 249px 526px; grid-template-rows: 31px 32px 37px 38px 37px 38px 37px 38px 38px; font-size: 14px; }
.grid > div { border: 0 solid #4472c4; border-right-width: 1px; border-bottom-width: 1px; display: flex; align-items: center; box-shadow: 0 1px #c2d0ee, 1px 0 #d4def3; padding-bottom: 2px; }
.grid .hid, .grid .hname { grid-row: 1 / 3; justify-content: center; font-style: italic; padding-bottom: 3px; }
.hyear { justify-content: center; font-style: italic; font-size: 10.5px; }
.hyear, .grid .months, .grid .tl { border-right-width: 0; }
.grid .months { display: grid; grid-template-columns: 44px 41px 45px 43px 44px 44px 44px 45px 43px 45px 43px 45px; font-style: italic; font-size: 10.5px; padding: 0; }
.months span { height: 31px; line-height: 28px; text-align: center; border-right: 1px solid #4472c4; box-shadow: 1px 0 #a9bee6; }
.months span:last-child { border: 0; box-shadow: none; }
.id { justify-content: center; }
.nm { padding-left: 5px; }
.nm.sub { padding-left: 30px; }
.nm.b { font-weight: 700; }
.bars { position: absolute; left: 0; top: 0; }

i.up, i.down, i.left, i.right { border: 4.5px solid transparent; display: block; width: 0; height: 0; }
i.up { border-bottom: 8px solid #6a6a6a; border-top: 0; }
i.down { border-top: 8px solid #6a6a6a; border-bottom: 0; }
i.left { border-right: 8px solid #6a6a6a; border-left: 0; }
i.right { border-left: 8px solid #6a6a6a; border-right: 0; }
i.up.blue { border-bottom: 5px solid #3a62b5; }
.vscroll { width: 16px; background: #f4f4f4; border-radius: 8px; display: grid; justify-items: center; flex: none; }
.vscroll b, .hscroll b { background: #6f6f6f; border-radius: 5px; }
.vscroll b { width: 9px; }
.hscroll { display: grid; align-items: center; background: #f4f4f4; border-radius: 8px; }
.v1 { height: 343px; grid-template-rows: 147px 43px 1fr; padding-top: 5px; }
.v1 b { height: 43px; }
.v1 .down, .v2 .down { align-self: end; margin-bottom: 4px; }
.pagebar { height: 30px; display: flex; padding-left: 62px; border-top: 1px solid #e4e4e4; background: #fff; }
.pg { background: #efefef; width: 52px; height: 26px; padding-left: 5px; }
.pg u { display: block; width: 42px; height: 23px; border-bottom: 2px solid #1b55ad; text-decoration: none; text-align: center; line-height: 19px; }
.all { margin: 6px 0 0 6px; width: 66px; height: 16px; border: solid #ddd; border-width: 0 1px; display: flex; align-items: center; gap: 11px; padding-left: 9px; }
.pagebar > svg { margin: 6px 0 0 10px; }
.pagebar > .dots { margin: 6px 0 0 579px; }
.h1 { margin: 4px 0 0 8px; width: 711px; height: 17px; grid-template-columns: 253px 230px 1fr; padding-left: 4px; }
.h1 b { height: 9px; }
.h1 .right, .h2 .right { justify-self: end; margin-right: 4px; }
.pagebar > .gripper { margin: 15px 0 0 6px; }
.sheetwin { border-top: 1px solid #1b55ad; height: 405px; }
.sheetwin .wt { height: 30px; border-bottom: 1px solid #1b55ad; }
.sheet-main { height: 353px; display: flex; padding-left: 3px; }
.sheet { width: 1509px; height: 353px; background: #ababab; overflow: hidden; padding-left: 3px; display: flex; flex-direction: column; gap: 3px; flex: none; color: #000; }
.blk { display: grid; grid-auto-rows: 21px; border: 1px solid #6a6a6a; border-width: 1px 0 0 1px; box-shadow: 0 0 1px #888; flex: none; }
.ba { width: 865px; grid-template-columns: 128px 160px 128px 160px 128px 160px; }
.bf { width: 937px; grid-template-columns: 128px 160px 152px 160px 176px 160px; }
.bc { width: 1600px; grid-template-columns: 128px repeat(13, 112px); }
.first { margin-top: -15px; }
.blk s, .blk p, .blk h4, .blk h5 { margin: 0; border: solid #bdbdbd; border-width: 0 1px 1px 0; line-height: 19px; overflow: hidden; padding: 0 4px 0 3px; font-size: 12px; }
.blk s { background: #e3e3e3; color: #f00; text-align: right; text-decoration: none; }
.blk p { background: #fff; padding-right: 0; }
.blk .bl { color: #00f; }
.blk h4 { grid-column: 1 / -1; background: #99b4d1; border-color: #999; }
.blk h5 { background: #f0f0f0; text-align: center; border-color: #aaa; }
.blk .first-h { background: #99b4d1; text-align: left; }
.blk .cut { padding-left: 18px; text-align: left; }
.blk .span4 { grid-column: span 4; }
.blk .span2 { grid-column: span 2; }
.blk .cur { outline: 2px solid #000; z-index: 1; border-color: #000; margin-right: 1px; }
.ba > :nth-last-child(-n+3), .bf > :nth-last-child(-n+6) { border-bottom-color: #6a6a6a; }
.v2 { height: 353px; grid-template-rows: 83px 43px 1fr; padding-top: 5px; }
.v2 b { height: 43px; }
.hrow { height: 19px; display: flex; padding-left: 4px; }
.h2 { width: 1509px; height: 17px; grid-template-columns: 12px 165px 1fr; padding-left: 4px; }
.h2 b { height: 9px; }
.hrow .gripper { margin: 5px 0 0 4px; }

/* format pane */
.pane { width: 386px; height: 810px; background: #efefef; box-shadow: inset 0 4px 4px -3px #bbb; }
.pane-title { display: grid; grid-template-columns: 299px 43px 12px; padding: 13px 0 0 14px; align-items: center; height: 38px; font-size: 15px; line-height: 22px; font-weight: 500; }
.pane-tabs { display: flex; gap: 16px; align-items: center; padding: 9px 0 0 16px; height: 42px; }
.pane-tabs .dims { margin-left: 4px; }
.ptab { width: 32px; height: 32px; border: 1px solid #555; border-radius: 4px; background: #fff; display: grid; place-items: center; }
.notch { margin: 6px 0 0 14px; }
.pane-scroll { display: flex; margin-top: 4px; height: 691px; }
.opts { width: 355px; padding-right: 3px; height: 691px; overflow: hidden; }
.sec { height: 24px; display: flex; align-items: center; gap: 5px; padding-left: 21px; font-weight: 700; }
.sec.two { margin-top: 14px; }
.radios { margin: 7px 0 0 36px; border-bottom: 1px solid #cfcfcf; padding-bottom: 4px; }
.radios label { height: 25px; display: flex; align-items: center; }
.radios i { width: 12px; height: 12px; border: 1px solid #999; border-radius: 50%; background: #fff; margin-right: 6px; flex: none; }
.radios .off i { border-color: #ccc; background: #f3f3f3; }
.radios i.on { border: 3.500px solid #185abd; }
.fields { display: flex; flex-direction: column; gap: 6px; padding: 6px 0 0 46px; }
.f { display: flex; align-items: center; flex: none; }
.btn { height: 29px; }
.num { height: 26px; }
.pick { height: 23px; }
.box { margin-left: auto; height: 100%; width: 46px; border: 1px solid #8a8a8a; border-radius: 4px; background: #fff; display: flex; align-items: center; justify-content: space-between; padding: 0 5px 0 9px; }
.num .box { width: 103px; padding: 0 5px 2px 6px; }
.num .box.size { width: 94px; }
.box.narrow { width: 50px; padding-left: 5px; }
.box.mid { width: 65px; padding-left: 5px; }
.slider { width: 132px; height: 9px; margin-left: 13px; border-left: 2px solid #777; background: linear-gradient(#888, #888) 0 4px/100% 1px no-repeat; }
.spin { display: flex; flex-direction: column; gap: 8px; padding-top: 2px; }
.spin svg:first-child { transform: rotate(180deg); }
.v3 { width: 17px; height: 691px; grid-template-rows: 12px 622px 1fr; padding-top: 5px; background: #f5f5f5; }
.v3 .down { align-self: end; margin-bottom: 5px; }

/* status and task bars */
.status { height: 22px; background: #f4f4f4; display: grid; grid-template-columns: 67px 104px 96px 84px 124px 1fr 280px; align-items: center; padding-left: 11px; flex: none; border-top: 1px solid #fff; }
.status > span { margin-top: -1px; }
.view { display: grid; grid-template-columns: 28px 39px 34px 118px 20px 41px; align-items: center; }
.taskbar { height: 40px; flex: none; background: linear-gradient(90deg, #1d212b, #262c37 50%, #2b323f); display: flex; color: #fff; }
.tk { width: 48px; height: 40px; display: grid; place-items: center; flex: none; margin-right: 1px; }
.view-btn { padding-right: 4px; }
.run { background: linear-gradient(#76b9ed, #76b9ed) 4px 38px/40px 2px no-repeat; }
.active { background: linear-gradient(#76b9ed, #76b9ed) 0 38px/48px 2px no-repeat, #4d535d; }
.tray { margin-left: auto; width: 274px; display: grid; grid-template-columns: 22px 24px 24px 26px 26px 30px 78px 39px 1px; align-items: center; }
.tray hr { height: 40px; background: #6b707a; }
.ime { font-size: 13px; }
.clock { text-align: center; width: 60px; line-height: 19px; }
.action { display: grid; }
.action > * { grid-area: 1 / 1; }
.action b { font-size: 11px; padding: 10px 0 0 13px; }

/* markup laid over the screen */
.notes { position: absolute; left: 0; top: 0; }
.note { position: absolute; font: 24px/30px "Liberation Sans", "Noto Sans CJK SC", sans-serif; color: #f00; }
.note b { display: inline-block; width: 12px; font-size: 21px; }
.n1 { left: 1029px; top: 321px; }
.n2 { left: 1043px; top: 718px; }
.mark { position: absolute; left: 1655px; top: 1027px; font: 34.800px/42px "Liberation Sans", sans-serif; color: rgba(215, 215, 218, .8); text-shadow: 1px 1px 1px rgba(90, 90, 90, .8); }
```
